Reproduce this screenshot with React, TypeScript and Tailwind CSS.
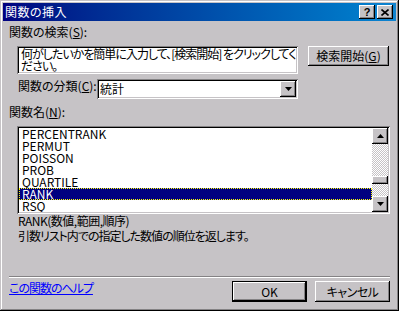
import React from "react";

const raised =
  "shadow-[inset_-1px_-1px_#000,inset_1px_1px_#fff,inset_-2px_-2px_#848284,inset_2px_2px_#c6c3c6]";
const sunken =
  "shadow-[inset_1px_1px_#848284,inset_-1px_-1px_#fff,inset_2px_2px_#000,inset_-2px_-2px_#c6c3c6]";

function Tri({ down }: { down?: boolean }) {
  return (
    <svg width="7" height="4" viewBox="0 0 7 4" className="block">
      {down ? (
        <polygon points="0,0 7,0 3.5,4" fill="#000" />
      ) : (
        <polygon points="0,4 7,4 3.5,0" fill="#000" />
      )}
    </svg>
  );
}

export default function App() {
  const items = ["PERCENTRANK", "PERMUT", "POISSON", "PROB", "QUARTILE", "RANK", "RSQ"];
  return (
    <div
      className={`w-[399px] h-[311px] bg-[#c6c3c6] p-[3px] flex flex-col overflow-hidden text-black text-[12px] leading-[12px] [font-family:'Noto_Sans_CJK_JP','Noto_Sans',sans-serif] [font-feature-settings:'palt'] shadow-[inset_-1px_-1px_#000,inset_1px_1px_#c6c3c6,inset_-2px_-2px_#848284,inset_2px_2px_#fff]`}
    >
      {/* Title bar */}
      <div className="h-[18px] flex items-center bg-linear-to-r from-[#000080] to-[#1084d0] pl-[2px] pr-[3px] shrink-0">
        <span className="flex-1 text-white tracking-[0.5px]">関数の挿入</span>
        <div className="flex gap-[2px]">
          <div className={`w-[16px] h-[14px] bg-[#c6c3c6] flex items-center justify-center ${raised}`}>
            <span className="text-[11px] leading-[11px] font-bold [font-family:'Liberation_Sans',sans-serif]">?</span>
          </div>
          <div className={`w-[16px] h-[14px] bg-[#c6c3c6] flex items-center justify-center ${raised}`}>
            <svg width="8" height="7" viewBox="0 0 8 7" className="block">
              <path d="M0.5 0.5 L7.5 6.5 M7.5 0.5 L0.5 6.5" stroke="#000" strokeWidth="1.6" />
            </svg>
          </div>
        </div>
      </div>

      {/* Content */}
      <div className="flex-1 flex flex-col px-[6px]">
        <div className="mt-[5px] h-[12px]">
          関数の検索(<span className="underline">S</span>):
        </div>

        <div className="mt-[8px] pl-[8px] flex gap-[10px] items-start">
          <div className={`w-[281px] h-[28px] bg-white px-[4px] pt-[2px] overflow-hidden whitespace-nowrap tracking-[-1px] ${sunken}`}>
            <div className="h-[12px]">何がしたいかを簡単に入力して、[検索開始] をクリックしてく</div>
            <div className="h-[12px]">ださい。</div>
          </div>
          <div className={`w-[81px] h-[20px] bg-[#c6c3c6] flex items-center justify-center ${raised}`}>
            検索開始(<span className="underline">G</span>)
          </div>
        </div>

        <div className="mt-[5px] pl-[9px] flex items-start">
          <div className="w-[79px] h-[12px] mt-[1px] whitespace-nowrap">
            関数の分類(<span className="underline">C</span>):
          </div>
          <div className={`w-[201px] h-[20px] bg-white p-[2px] flex items-center ${sunken}`}>
            <span className="flex-1 pl-[1px]">統計</span>
            <div className={`w-[16px] h-[16px] bg-[#c6c3c6] flex items-center justify-center ${raised}`}>
              <Tri down />
            </div>
          </div>
        </div>

        <div className="mt-[7px] h-[12px]">
          関数名(<span className="underline">N</span>):
        </div>

        <div className={`mt-[8px] ml-[8px] w-[373px] h-[88px] bg-white p-[2px] flex ${sunken}`}>
          <div className="flex-1 flex flex-col overflow-hidden">
            {items.map((it) =>
              it === "RANK" ? (
                <div
                  key={it}
                  className="h-[12px] shrink-0 pl-[3px] bg-[#000080] text-white outline-1 outline-dotted outline-[#ffff00] -outline-offset-1"
                >
                  {it}
                </div>
              ) : (
                <div key={it} className="h-[12px] shrink-0 pl-[3px]">
                  {it}
                </div>
              )
            )}
          </div>
          <div className="w-[16px] flex flex-col">
            <div className={`h-[16px] bg-[#c6c3c6] flex items-center justify-center ${raised}`}>
              <Tri />
            </div>
            <div className="flex-1 flex flex-col [background-image:repeating-conic-gradient(#c6c3c6_0_25%,#ffffff_0_50%)] [background-size:2px_2px]">
              <div className="h-[32px]" />
              <div className={`h-[8px] bg-[#c6c3c6] ${raised}`} />
            </div>
            <div className={`h-[16px] bg-[#c6c3c6] flex items-center justify-center ${raised}`}>
              <Tri down />
            </div>
          </div>
        </div>

        <div className="mt-[1px] pl-[9px] h-[12px] whitespace-nowrap tracking-[-0.5px]">RANK(数値,範囲,順序)</div>
        <div className="mt-[3px] pl-[9px] h-[12px] whitespace-nowrap tracking-[-1px]">引数リスト内での指定した数値の順位を返します。</div>

        <div className="mt-[34px] border-t border-t-[#848284] border-b border-b-white" />

        <div className="mt-[3px] flex items-start">
          <div className="mt-[1px] text-[#0000ff] underline h-[12px] tracking-[-1px]">この関数のヘルプ</div>
          <div className="ml-auto flex gap-[8px]">
            <div className="w-[75px] h-[21px] bg-[#c6c3c6] flex items-center justify-center shadow-[inset_0_0_0_1px_#000,inset_-2px_-2px_#000,inset_2px_2px_#fff,inset_-3px_-3px_#848284]">
              OK
            </div>
            <div className={`w-[75px] h-[21px] bg-[#c6c3c6] flex items-center justify-center tracking-[-0.5px] ${raised}`}>
              キャンセル
            </div>
          </div>
        </div>
      </div>
    </div>
  );
}
